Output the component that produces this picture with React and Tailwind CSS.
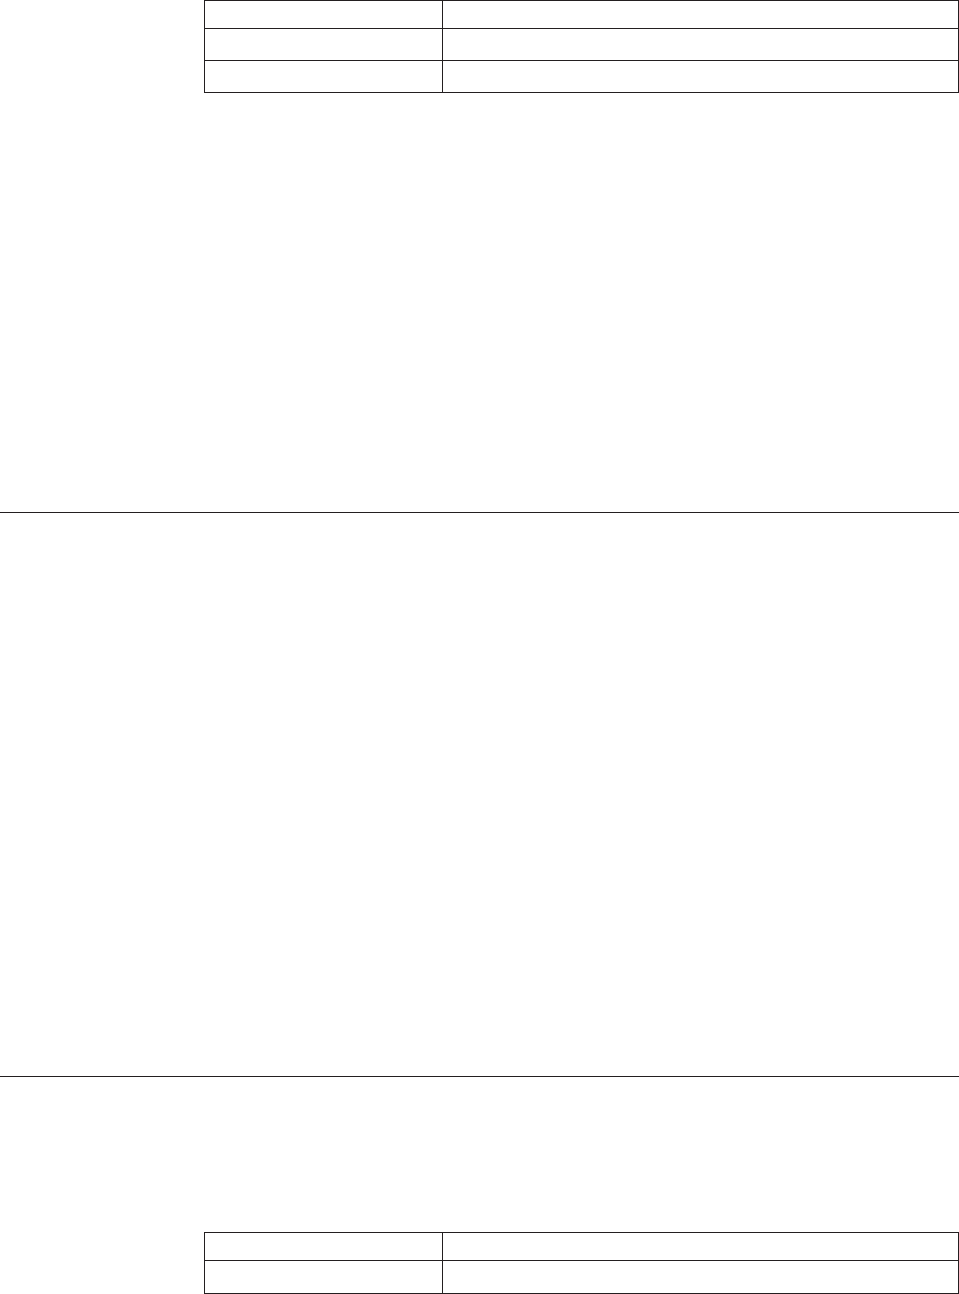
import React from 'react';

function Row({ height, last }) {
  return (
    <div className={`flex ${height} ${last ? '' : 'border-b border-[#231f20]'}`}>
      <div className="w-[238px] border-r border-[#231f20]"></div>
      <div className="flex-1"></div>
    </div>
  );
}

export default function App() {
  return (
    <div className="w-[959px] h-[1294px] bg-white overflow-hidden font-['Liberation_Sans',sans-serif]">
      {/* Top table */}
      <div className="ml-[204px] w-[755px] border border-[#231f20]">
        <Row height="h-[28px]" />
        <Row height="h-[32px]" />
        <Row height="h-[31px]" last />
      </div>

      <div className="mt-[419px] h-px w-full bg-[#231f20]"></div>
      <div className="mt-[563px] h-px w-full bg-[#231f20]"></div>

      {/* Bottom table */}
      <div className="mt-[155px] ml-[204px] w-[755px] border border-[#231f20]">
        <Row height="h-[28px]" />
        <Row height="h-[32px]" last />
      </div>
    </div>
  );
}
